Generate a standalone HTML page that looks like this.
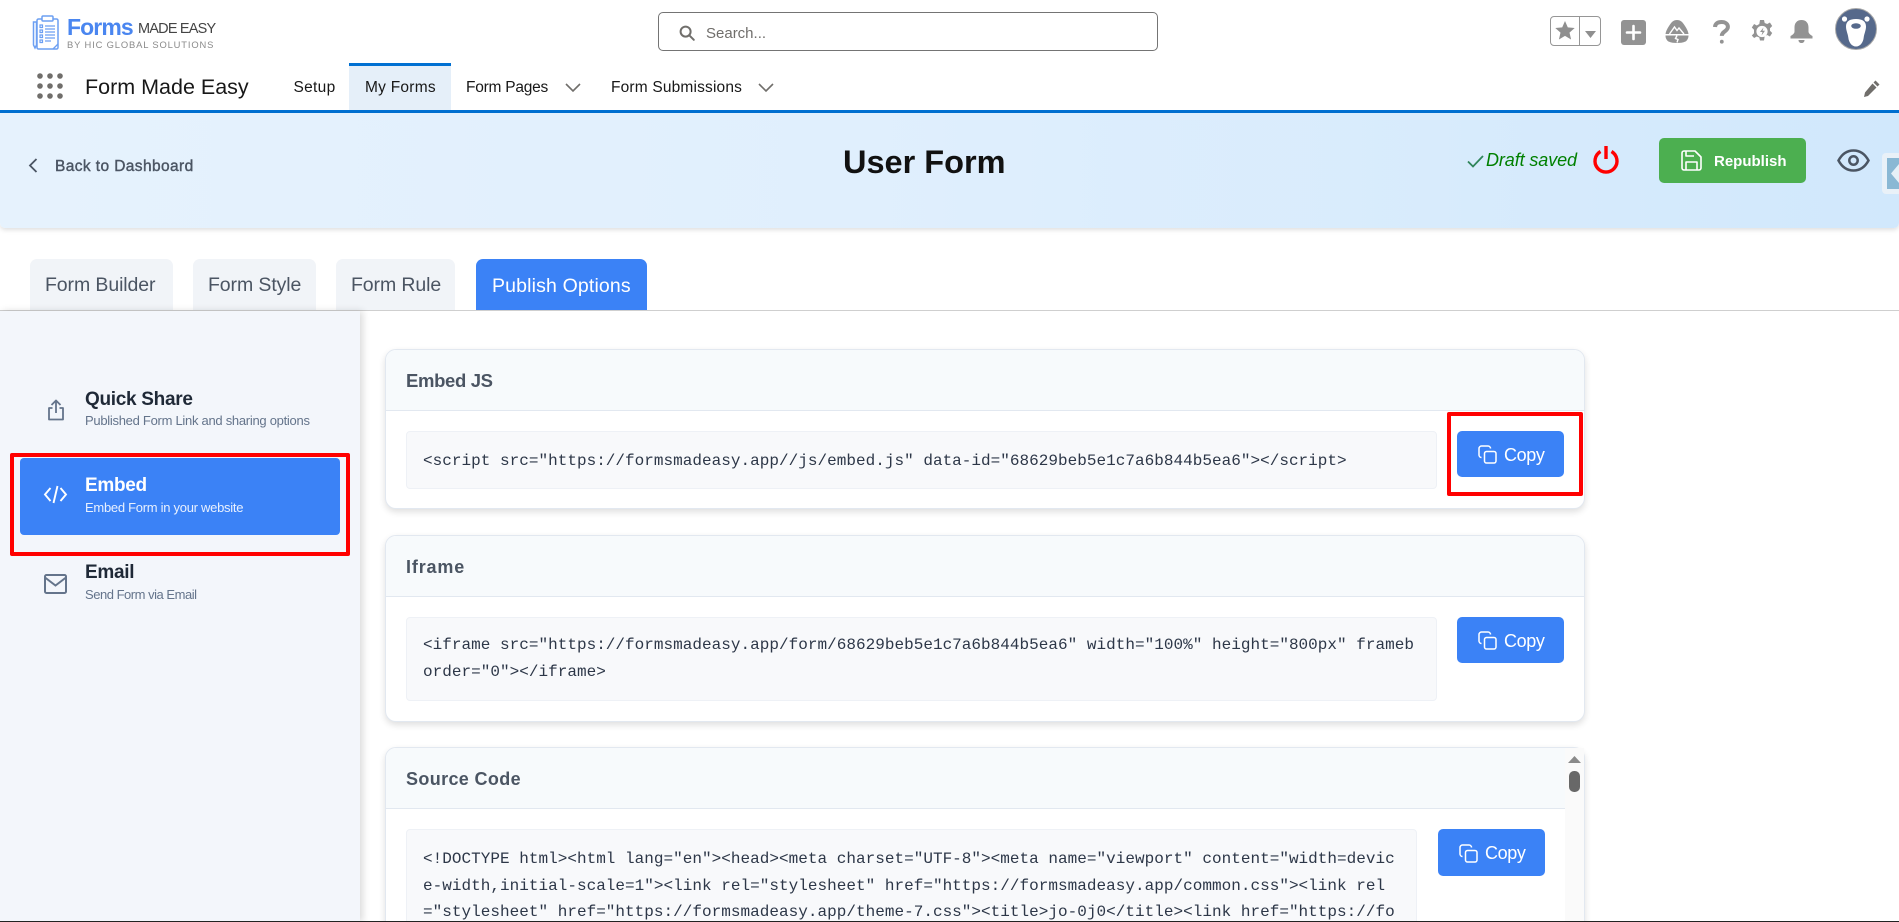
<!DOCTYPE html>
<html lang="en"><head><meta charset="UTF-8"><title>Form Made Easy</title>
<style>
*{box-sizing:border-box}
html{margin:0;padding:0;width:1899px;height:922px;overflow:hidden;background:#fff}
body{margin:0;padding:0;background:#fff;width:1899px;height:922px;position:relative;overflow:hidden;font-family:"Liberation Sans",sans-serif;color:#1f2937}
#w{position:absolute;left:0;top:0;width:1899px;height:922px;overflow:hidden}
.a{position:absolute}
.t{position:absolute;white-space:pre;line-height:1}
svg{position:absolute;display:block;overflow:visible}
.card{position:absolute;left:385px;width:1200px;background:#fff;border:1px solid #e2e8f0;border-radius:11px;box-shadow:0 3px 7px rgba(0,0,0,.13);overflow:hidden}
.chead{position:absolute;left:0;top:0;width:100%;background:#f7fafc;border-bottom:1px solid #e2e8f0}
.code{position:absolute;background:#f8f9fb;border:1px solid #eef1f6;border-radius:4px}
.m{position:absolute;white-space:pre;font-family:"Liberation Mono",monospace;font-size:16px;letter-spacing:.02px;line-height:1;color:#2d3748}
.copy{position:absolute;width:107px;height:46px;background:#3b82f6;border-radius:5px}
.tab{position:absolute;top:259px;height:51px;background:#f1f4f8;border-radius:7px 7px 0 0}
.red{position:absolute;border:4px solid #f00;border-radius:2px}
</style></head><body><div id="w">

<!-- Logo -->
<svg style="left:32px;top:15px" width="28" height="35" viewBox="0 0 28 35" fill="none" stroke="#6c9ff2" stroke-width="1.5">
<rect x="5" y="4" width="21" height="30" rx="1.5"/><rect x="10" y="1" width="11" height="5" rx="1" fill="#fff"/>
<path d="M1.5 7v23l1.5 3 1.5-3V7z"/>
<path d="M8 10h2.5v2.5H8zM8 15h2.5v2.5H8zM8 20h2.5v2.5H8zM8 25h2.5v2.5H8z" stroke-width="1.2"/>
<path d="M13 11h10M13 14h10M13 17h10M13 20h10M13 23h10M13 26h6" stroke-width="1.3"/>
<path d="M21 34l5-5" stroke-width="1.3"/></svg>
<div class="t" style="left:67px;top:16px;font-size:23px;font-weight:700;color:#4a86f0;letter-spacing:-.9px">Forms</div>
<div class="t" style="left:138px;top:22px;font-size:14.5px;color:#444;letter-spacing:-.8px">MADE EASY</div>
<div class="t" style="left:67px;top:40px;font-size:9.4px;color:#8a8a8a;letter-spacing:.85px">BY HIC GLOBAL SOLUTIONS</div>

<!-- Search -->
<div class="a" style="left:658px;top:12px;width:500px;height:39px;border:1px solid #747474;border-radius:5px;background:#fff"></div>
<svg style="left:679px;top:25px" width="16" height="16" viewBox="0 0 16 16" fill="none" stroke="#706e6b" stroke-width="2"><circle cx="6.6" cy="6.6" r="5"/><path d="M10.4 10.4l4.4 4.4" stroke-linecap="round"/></svg>
<div class="t" style="left:706px;top:26px;font-size:15px;color:#706e6b">Search...</div>

<!-- Top right icons -->
<div class="a" style="left:1550px;top:16px;width:51px;height:30px;border:1px solid #969696;border-radius:4px"></div>
<div class="a" style="left:1579px;top:16px;width:1px;height:30px;background:#969696"></div>
<svg style="left:1555px;top:21px" width="20" height="19" viewBox="0 0 20 19" fill="#8f8f8f"><path d="M10 0l2.8 6.4 6.9.6-5.2 4.6 1.6 6.9L10 14.9 3.9 18.5l1.6-6.9L.3 7l6.9-.6z"/></svg>
<svg style="left:1585px;top:31px" width="11" height="7" viewBox="0 0 11 7" fill="#8f8f8f"><path d="M0 0h11L5.5 7z"/></svg>
<div class="a" style="left:1621px;top:20px;width:25px;height:25px;background:#939393;border-radius:3px"></div>
<svg style="left:1621px;top:20px" width="25" height="25" viewBox="0 0 25 25" stroke="#fff" stroke-width="2.6" stroke-linecap="round"><path d="M12.5 6v13M6 12.5h13"/></svg>
<svg style="left:1665px;top:20px" width="24" height="23" viewBox="0 0 24 23"><path d="M12 0c3 0 5 1.500 7 4.500 2 3 4 6 4.500 9.500H.5C1 10.500 3 7.500 5 4.500 7 1.500 9 0 12 0z" fill="#939393"/><path d="M.5 15.500h23c0 3-1.500 5-3 6-2.500 1.200-5.500 1.500-8.500 1.500s-6-.3-8.500-1.500c-1.500-1-3-3-3-6z" fill="#939393"/><path d="M4.500 14l5-7 2.500 3.500 2-2.500 5 6M12 15.500l-1.500 3 2.500 1-1 3" fill="none" stroke="#fff" stroke-width="1.400"/></svg>
<svg style="left:1713px;top:20px" width="17" height="24" viewBox="0 0 17 24" fill="none" stroke="#939393" stroke-width="4"><path d="M2 7C2.200 3.600 4.700 2 8.500 2c3.700 0 6.400 1.900 6.400 4.900 0 4.300-6.100 4.400-6.100 9"/><circle cx="8.800" cy="21.700" r="1.000" fill="#939393" stroke-width="1.800"/></svg>
<svg style="left:1751px;top:20px" width="22" height="23" viewBox="0 0 22 23"><path d="M9 0h4l.7 3 2.500 1 2.700-1.500 2.300 3.500-2.200 2.200v2.600l2.200 2.200-2.300 3.500-2.700-1.500-2.500 1-.7 4.500H9l-.7-3-2.500-1-2.700 1.500L.8 15.500 3 13.300v-3.600L.8 7.500 3.100 4l2.700 1.500 2.500-1.500z" fill="#939393"/><circle cx="11" cy="11.500" r="5.600" fill="#fff"/><path d="M12.500 7.500l-3.500 4.500h2.500l-1 3.500 3.500-4.700h-2.500z" fill="#939393"/></svg>
<svg style="left:1790px;top:20px" width="23" height="23" viewBox="0 0 23 23" fill="#939393"><path d="M11.500 0c4.500 0 7 3 7 7.500v4c0 2 2 3.500 4 4.500v2.500H.5V16c2-1 4-2.500 4-4.500v-4C4.500 3 7 0 11.500 0z"/><path d="M8.500 20h6c0 2-1.300 3-3 3s-3-1-3-3z"/></svg>
<svg style="left:1835px;top:8px" width="42" height="42" viewBox="0 0 42 42"><circle cx="21" cy="21" r="20.500" fill="#56698b" stroke="#a9a9a9" stroke-width="1"/><circle cx="9.500" cy="11" r="2.600" fill="#fff"/><circle cx="32" cy="11" r="2.600" fill="#fff"/><path d="M21 11c6.500 0 10 2.500 10 7.500 0 4-1.800 7-2.300 11-.5 5-3.500 9-7.700 9s-7.200-4-7.700-9c-.5-4-2.300-7-2.300-11 0-5 3.500-7.500 10-7.500z" fill="#fff"/><ellipse cx="21" cy="18" rx="4.800" ry="2.800" fill="#56698b"/></svg>

<!-- Nav -->
<svg style="left:37px;top:73px" width="26" height="26" viewBox="0 0 26 26" fill="#706e6b"><circle cx="3" cy="3" r="2.800"/><circle cx="13" cy="3" r="2.800"/><circle cx="23" cy="3" r="2.800"/><circle cx="3" cy="13" r="2.800"/><circle cx="13" cy="13" r="2.800"/><circle cx="23" cy="13" r="2.800"/><circle cx="3" cy="23" r="2.800"/><circle cx="13" cy="23" r="2.800"/><circle cx="23" cy="23" r="2.800"/></svg>
<div class="t" style="left:85px;top:77px;font-size:21.500px;color:#181818">Form Made Easy</div>
<div class="t" style="left:293.500px;top:80px;font-size:15.500px;color:#181818;letter-spacing:.3px">Setup</div>
<div class="a" style="left:349px;top:63px;width:102px;height:47px;background:#e5eff9;border-top:3px solid #0070d2"></div>
<div class="t" style="left:365px;top:80px;font-size:15.500px;color:#181818;letter-spacing:.25px">My Forms</div>
<div class="t" style="left:466px;top:80px;font-size:15.500px;color:#181818;letter-spacing:-.24px">Form Pages</div>
<svg style="left:565px;top:83px" width="16" height="9" viewBox="0 0 16 9" fill="none" stroke="#706e6b" stroke-width="1.600"><path d="M1 1l7 7 7-7"/></svg>
<div class="t" style="left:611px;top:80px;font-size:15.500px;color:#181818;letter-spacing:.17px">Form Submissions</div>
<svg style="left:758px;top:83px" width="16" height="9" viewBox="0 0 16 9" fill="none" stroke="#706e6b" stroke-width="1.600"><path d="M1 1l7 7 7-7"/></svg>
<svg style="left:1863px;top:80px" width="17" height="17" viewBox="0 0 17 17" fill="#706e6b"><path d="M12.500.5l4 4-2 2-4-4zM9.500 3.500l4 4-8.500 8.500-4 1 1-4.500z"/></svg>
<div class="a" style="left:0;top:110px;width:1899px;height:3px;background:#0070d2"></div>

<!-- Banner -->
<div class="a" style="left:0;top:113px;width:1899px;height:115px;background:linear-gradient(90deg,#e6f2fd 0%,#e0effd 45%,#d1e8fc 100%);border-radius:0 0 5px 5px;box-shadow:0 2px 5px rgba(0,0,0,.13)"></div>
<svg style="left:28px;top:158px" width="10" height="15" viewBox="0 0 10 15" fill="none" stroke="#4b5563" stroke-width="1.800"><path d="M8.500 1L2 7.500 8.500 14"/></svg>
<div class="t" style="left:55px;top:159px;font-size:15.500px;font-weight:400;color:#4b5563;-webkit-text-stroke:.4px #4b5563;letter-spacing:.4px">Back to Dashboard</div>
<div class="t" style="left:843px;top:146px;font-size:32.500px;font-weight:700;color:#111">User Form</div>
<svg style="left:1467px;top:155px" width="17" height="13" viewBox="0 0 17 13" fill="none" stroke="#2f855a" stroke-width="1.800"><path d="M1 6.500l5 5L16 1"/></svg>
<div class="t" style="left:1486px;top:151px;font-size:18px;font-style:italic;color:#008000;letter-spacing:-.1px">Draft saved</div>
<svg style="left:1593px;top:146px" width="26" height="28" viewBox="0 0 26 28" fill="none" stroke="#f00" stroke-width="3.400"><path d="M13 0v13"/><path d="M7.500 5.500a11 11 0 1 0 11 0"/></svg>
<div class="a" style="left:1659px;top:138px;width:147px;height:45px;background:#4caf50;border-radius:5px"></div>
<svg style="left:1681px;top:150px" width="21" height="21" viewBox="0 0 21 21" fill="none" stroke="#fff" stroke-width="1.600" stroke-linejoin="round"><path d="M1 3a2 2 0 0 1 2-2h11l6 6v11a2 2 0 0 1-2 2H3a2 2 0 0 1-2-2z"/><path d="M5 20v-8h11v8M5 1v5h8"/></svg>
<div class="t" style="left:1714px;top:154px;font-size:15px;font-weight:700;color:#fff">Republish</div>
<svg style="left:1837px;top:149px" width="33" height="23" viewBox="0 0 33 23" fill="none" stroke="#4b5563" stroke-width="2.500"><path d="M1.500 11.500C5 5 10 1.500 16.500 1.500S28 5 31.500 11.500C28 18 23 21.500 16.500 21.500S5 18 1.500 11.500z"/><circle cx="16.500" cy="11.500" r="4.200"/></svg>
<div class="a" style="left:1882px;top:153px;width:17px;height:41px;background:#e9f1f8;border-radius:4px 0 0 4px"></div>
<div class="a" style="left:1887px;top:158px;width:12px;height:31px;background:#8ab8d4"></div>
<svg style="left:1891px;top:164px" width="8" height="19" viewBox="0 0 8 19" fill="#e6f0f7"><path d="M8 0v19L0 9.500z"/></svg>

<!-- Tabs -->
<div class="tab" style="left:30px;width:143px"></div>
<div class="tab" style="left:193px;width:123px"></div>
<div class="tab" style="left:336px;width:119px"></div>
<div class="tab" style="left:476px;width:171px;background:#3b82f6"></div>
<div class="t" style="left:45px;top:276px;font-size:19.500px;color:#4b5563;letter-spacing:-.1px">Form Builder</div>
<div class="t" style="left:208px;top:276px;font-size:19.500px;color:#4b5563;letter-spacing:-.1px">Form Style</div>
<div class="t" style="left:351px;top:276px;font-size:19.500px;color:#4b5563;letter-spacing:-.1px">Form Rule</div>
<div class="t" style="left:492px;top:277px;font-size:19.500px;color:#fff;letter-spacing:.15px">Publish Options</div>
<div class="a" style="left:0;top:310px;width:1899px;height:1px;background:#cfcfcf"></div>

<!-- Sidebar -->
<div class="a" style="left:0;top:311px;width:360px;height:611px;background:#f3f6fb;box-shadow:3px 0 7px rgba(0,0,0,.14)"></div>
<svg style="left:48px;top:399px" width="16" height="22" viewBox="0 0 16 22" fill="none" stroke="#64748b" stroke-width="1.800"><path d="M8 14V1.500M3.500 6L8 1.500 12.500 6M4.500 9H1v11.500h14V9h-3.500" stroke-linejoin="round"/></svg>
<div class="t" style="left:85px;top:390px;font-size:19px;font-weight:700;color:#1f2937;letter-spacing:-.3px">Quick Share</div>
<div class="t" style="left:85px;top:414px;font-size:13px;color:#64748b;letter-spacing:-.28px">Published Form Link and sharing options</div>
<div class="a" style="left:20px;top:458px;width:320px;height:77px;background:#3b82f6;border-radius:4px"></div>
<svg style="left:44px;top:485px" width="23" height="19" viewBox="0 0 23 19" fill="none" stroke="#fff" stroke-width="1.900"><path d="M6.500 3L1 9.500 6.500 16M16.500 3L22 9.500 16.500 16M13.500 1L9.500 18"/></svg>
<div class="t" style="left:85px;top:476px;font-size:19px;font-weight:700;color:#fff;letter-spacing:-.3px">Embed</div>
<div class="t" style="left:85px;top:501px;font-size:13px;color:#e8f0fe;letter-spacing:-.28px">Embed Form in your website</div>
<div class="red" style="left:10px;top:453px;width:340px;height:103px"></div>
<svg style="left:44px;top:574px" width="23" height="20" viewBox="0 0 23 20" fill="none" stroke="#64748b" stroke-width="2"><rect x="1" y="1" width="21" height="18" rx="1.500"/><path d="M1 3.500l10.500 8 10.500-8"/></svg>
<div class="t" style="left:85px;top:563px;font-size:19px;font-weight:700;color:#1f2937;letter-spacing:-.3px">Email</div>
<div class="t" style="left:85px;top:588px;font-size:13px;color:#64748b;letter-spacing:-.48px">Send Form via Email</div>

<!-- Card 1 -->
<div class="card" style="top:349px;height:160px"><div class="chead" style="height:61px"></div></div>
<div class="t" style="left:406px;top:372px;font-size:18.500px;font-weight:700;color:#4b5563;letter-spacing:-.35px">Embed JS</div>
<div class="code" style="left:406px;top:431px;width:1031px;height:58px"></div>
<div class="m" style="left:423px;top:453px">&lt;script src=&quot;https://formsmadeasy.app//js/embed.js&quot; data-id=&quot;68629beb5e1c7a6b844b5ea6&quot;&gt;&lt;/script&gt;</div>
<div class="copy" style="left:1457px;top:431px"></div>
<svg style="left:1478px;top:445px" width="19" height="19" viewBox="0 0 19 19" fill="none" stroke="#fff" stroke-width="1.500"><rect x="6.500" y="6.500" width="11.500" height="11.500" rx="2"/><path d="M3.500 12.500A2.500 2.500 0 0 1 1 10V3.500A2.500 2.500 0 0 1 3.500 1H10a2.500 2.500 0 0 1 2.500 2.500"/></svg>
<div class="t" style="left:1504px;top:446px;font-size:18px;color:#fff;letter-spacing:-.4px">Copy</div>
<div class="red" style="left:1447px;top:412px;width:136px;height:84px"></div>

<!-- Card 2 -->
<div class="card" style="top:535px;height:187px"><div class="chead" style="height:61px"></div></div>
<div class="t" style="left:406px;top:558px;font-size:18px;font-weight:700;color:#4b5563;letter-spacing:.85px">Iframe</div>
<div class="code" style="left:406px;top:617px;width:1031px;height:84px"></div>
<div class="m" style="left:423px;top:637px">&lt;iframe src=&quot;https://formsmadeasy.app/form/68629beb5e1c7a6b844b5ea6&quot; width=&quot;100%&quot; height=&quot;800px&quot; frameb</div>
<div class="m" style="left:423px;top:664px">order=&quot;0&quot;&gt;&lt;/iframe&gt;</div>
<div class="copy" style="left:1457px;top:617px"></div>
<svg style="left:1478px;top:631px" width="19" height="19" viewBox="0 0 19 19" fill="none" stroke="#fff" stroke-width="1.500"><rect x="6.500" y="6.500" width="11.500" height="11.500" rx="2"/><path d="M3.500 12.500A2.500 2.500 0 0 1 1 10V3.500A2.500 2.500 0 0 1 3.500 1H10a2.500 2.500 0 0 1 2.500 2.500"/></svg>
<div class="t" style="left:1504px;top:632px;font-size:18px;color:#fff;letter-spacing:-.4px">Copy</div>

<!-- Card 3 -->
<div class="card" style="top:747px;height:190px"><div class="chead" style="height:61px"></div></div>
<div class="t" style="left:406px;top:770px;font-size:18px;font-weight:700;color:#4b5563;letter-spacing:.36px">Source Code</div>
<div class="code" style="left:406px;top:829px;width:1011px;height:110px"></div>
<div class="m" style="left:423px;top:851px">&lt;!DOCTYPE html&gt;&lt;html lang=&quot;en&quot;&gt;&lt;head&gt;&lt;meta charset=&quot;UTF-8&quot;&gt;&lt;meta name=&quot;viewport&quot; content=&quot;width=devic</div>
<div class="m" style="left:423px;top:878px">e-width,initial-scale=1&quot;&gt;&lt;link rel=&quot;stylesheet&quot; href=&quot;https://formsmadeasy.app/common.css&quot;&gt;&lt;link rel</div>
<div class="m" style="left:423px;top:904px">=&quot;stylesheet&quot; href=&quot;https://formsmadeasy.app/theme-7.css&quot;&gt;&lt;title&gt;jo-0j0&lt;/title&gt;&lt;link href=&quot;https://fo</div>
<div class="copy" style="left:1438px;top:829px;height:47px"></div>
<svg style="left:1459px;top:844px" width="19" height="19" viewBox="0 0 19 19" fill="none" stroke="#fff" stroke-width="1.500"><rect x="6.500" y="6.500" width="11.500" height="11.500" rx="2"/><path d="M3.500 12.500A2.500 2.500 0 0 1 1 10V3.500A2.500 2.500 0 0 1 3.500 1H10a2.500 2.500 0 0 1 2.500 2.500"/></svg>
<div class="t" style="left:1485px;top:844px;font-size:18px;color:#fff;letter-spacing:-.4px">Copy</div>
<div class="a" style="left:1565px;top:748px;width:19px;height:174px;background:#fafafa"></div>
<svg style="left:1568px;top:756px" width="13" height="7" viewBox="0 0 13 7" fill="#8a8a8a"><path d="M6.500 0L13 7H0z"/></svg>
<div class="a" style="left:1569px;top:771px;width:11px;height:21px;background:#686868;border-radius:5px"></div>

<div class="a" style="left:0;top:921px;width:1899px;height:1px;background:#222"></div>
</div></body></html>
